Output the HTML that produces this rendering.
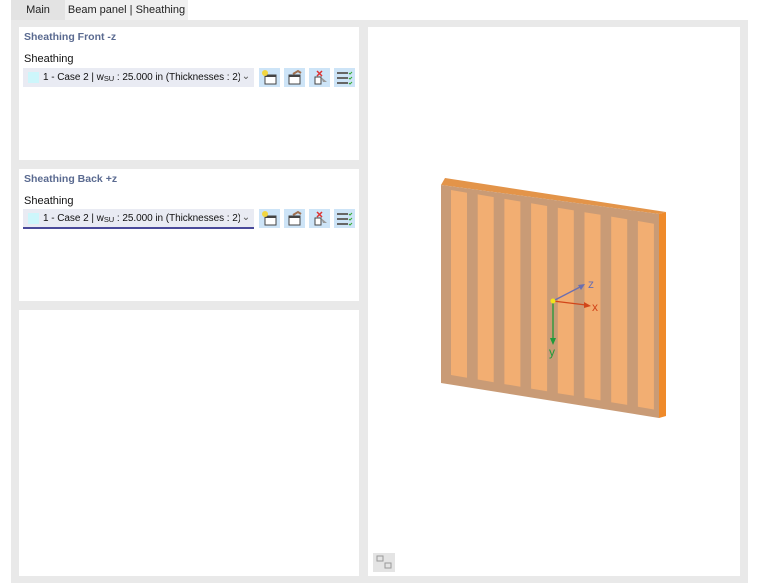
<!DOCTYPE html>
<html><head><style>
body{margin:0;width:760px;height:583px;background:#fff;font-family:"Liberation Sans",sans-serif;position:relative;overflow:hidden;font-size:11px}
.abs{position:absolute}
.tab{position:absolute;top:0;height:20px;line-height:21px;font-size:11px;color:#222;text-align:center}
.panel{position:absolute;background:#fff}
.ttl{position:absolute;left:5px;font-size:10.5px;color:#5a6a90;font-weight:bold}
.lbl{position:absolute;left:5px;font-size:11px;color:#111}
.combo{position:absolute;left:4px;width:231px;height:19px;background:#e9ebf3;font-size:10px;line-height:19px;color:#111;white-space:nowrap}
.combo .sw{position:absolute;left:5px;top:4px;width:11px;height:11px;background:#cdf6fb}
.combo .t{position:absolute;left:20px;letter-spacing:-0.05px}
.combo .ar{position:absolute;right:2px;top:1px;width:12px;height:16px;line-height:16px;text-align:center;color:#555;font-size:10px;background:#e9ebf3}
.btn{position:absolute;width:21px;height:19px;background:#cde4f7}
.btn svg{position:absolute;left:0;top:0}
</style></head><body>
<div class="abs" style="left:11px;top:20px;width:737px;height:563px;background:#e9e9e9"></div>
<div class="tab" style="left:11px;width:54px;background:#e3e3e3">Main</div>
<div class="tab" style="left:65px;width:123px;background:#f0f0f0">Beam panel | Sheathing</div>

<div class="panel" style="left:19px;top:27px;width:340px;height:133px">
 <div class="ttl" style="top:4px">Sheathing Front -z</div>
 <div class="lbl" style="top:26px">Sheathing</div>
 <div class="combo" style="top:41px"><div class="sw"></div><span class="t">1 - Case 2 | w<sub style="font-size:7.5px;vertical-align:-1px">SU</sub> : 25.000 in (Thicknesses : 2)</span><span class="ar">&#8964;</span></div>
 <div class="btn" style="left:240px;top:41px"><svg width="21" height="19"><rect x="6" y="7" width="11" height="9" fill="#fff" stroke="#444"/><rect x="6" y="7" width="11" height="2" fill="#444"/><circle cx="6" cy="5" r="3" fill="#f2d640"/></svg></div>
 <div class="btn" style="left:265px;top:41px"><svg width="21" height="19"><rect x="5" y="7" width="11" height="9" fill="#fff" stroke="#444"/><rect x="5" y="7" width="11" height="2" fill="#444"/><path d="M9 6 L14 3 L17 5" stroke="#a07050" stroke-width="2" fill="none"/></svg></div>
 <div class="btn" style="left:290px;top:41px"><svg width="21" height="19"><rect x="6" y="9" width="6" height="7" fill="#fff" stroke="#444"/><path d="M8 3 L13 8 M13 3 L8 8" stroke="#d33" stroke-width="1.5"/><path d="M12 9 L18 14 L14 14 Z" fill="#999"/></svg></div>
 <div class="btn" style="left:315px;top:41px"><svg width="21" height="19"><g fill="#666"><rect x="3" y="4" width="11" height="2"/><rect x="3" y="9" width="11" height="2"/><rect x="3" y="14" width="11" height="2"/></g><g stroke="#3a3" fill="none"><path d="M15 5 l1 1 l2 -2 M15 10 l1 1 l2 -2 M15 15 l1 1 l2 -2"/></g></svg></div>
</div>
<div class="panel" style="left:19px;top:169px;width:340px;height:132px">
 <div class="ttl" style="top:4px">Sheathing Back +z</div>
 <div class="lbl" style="top:26px">Sheathing</div>
 <div class="combo" style="top:40px;border-bottom:2px solid #4a4a9a;height:18px"><div class="sw"></div><span class="t">1 - Case 2 | w<sub style="font-size:7.5px;vertical-align:-1px">SU</sub> : 25.000 in (Thicknesses : 2)</span><span class="ar">&#8964;</span></div>
 <div class="btn" style="left:240px;top:40px"><svg width="21" height="19"><rect x="6" y="7" width="11" height="9" fill="#fff" stroke="#444"/><rect x="6" y="7" width="11" height="2" fill="#444"/><circle cx="6" cy="5" r="3" fill="#f2d640"/></svg></div>
 <div class="btn" style="left:265px;top:40px"><svg width="21" height="19"><rect x="5" y="7" width="11" height="9" fill="#fff" stroke="#444"/><rect x="5" y="7" width="11" height="2" fill="#444"/><path d="M9 6 L14 3 L17 5" stroke="#a07050" stroke-width="2" fill="none"/></svg></div>
 <div class="btn" style="left:290px;top:40px"><svg width="21" height="19"><rect x="6" y="9" width="6" height="7" fill="#fff" stroke="#444"/><path d="M8 3 L13 8 M13 3 L8 8" stroke="#d33" stroke-width="1.5"/><path d="M12 9 L18 14 L14 14 Z" fill="#999"/></svg></div>
 <div class="btn" style="left:315px;top:40px"><svg width="21" height="19"><g fill="#666"><rect x="3" y="4" width="11" height="2"/><rect x="3" y="9" width="11" height="2"/><rect x="3" y="14" width="11" height="2"/></g><g stroke="#3a3" fill="none"><path d="M15 5 l1 1 l2 -2 M15 10 l1 1 l2 -2 M15 15 l1 1 l2 -2"/></g></svg></div>
</div>
<div class="panel" style="left:19px;top:310px;width:340px;height:266px"></div>
<div class="panel" style="left:368px;top:27px;width:372px;height:549px"></div>
<div class="abs" style="left:373px;top:553px;width:22px;height:19px;background:#e4e4e4"></div>

<svg class="abs" style="left:0;top:0" width="760" height="583">
 <rect x="377" y="556" width="6" height="5" fill="none" stroke="#999"/>
 <rect x="385" y="563" width="6" height="5" fill="none" stroke="#999"/>
 <polygon points="441,185 445,178 666,212 659,214" fill="#e39449"/>
 <polygon points="659,214 666,212 666,416 659,418" fill="#ef8a2a"/>
 <polygon points="441,185 659,214 659,418 441,383" fill="#c99b76"/>
 <g fill="#f2ae72">
  <polygon points="451,190 467,192.7 467,377.7 451,375"/>
  <polygon points="477.7,194.4 493.7,197.1 493.7,382.2 477.7,379.5"/>
  <polygon points="504.4,198.9 520.4,201.5 520.4,386.7 504.4,384.1"/>
  <polygon points="531.1,203.3 547.1,206 547.1,391.3 531.1,388.6"/>
  <polygon points="557.8,207.7 573.8,210.4 573.8,395.8 557.8,393.2"/>
  <polygon points="584.5,212.2 600.5,214.8 600.5,400.4 584.5,397.7"/>
  <polygon points="611.2,216.6 627.2,219.3 627.2,404.9 611.2,402.2"/>
  <polygon points="637.9,221 653.9,223.7 653.9,409.5 637.9,406.8"/>
 </g>
 <line x1="553" y1="301" x2="582" y2="286" stroke="#6b6fb0" stroke-width="1.3"/>
 <polygon points="585,284 578,285 581,290" fill="#6b6fb0"/>
 <line x1="553" y1="301" x2="586" y2="305" stroke="#d2461a" stroke-width="1.3"/>
 <polygon points="591,306 584,302 584,308" fill="#d2461a"/>
 <line x1="553" y1="301" x2="553" y2="340" stroke="#1f9a3a" stroke-width="1.3"/>
 <polygon points="553,345 550,338 556,338" fill="#1f9a3a"/>
 <circle cx="553" cy="301" r="2.5" fill="#f4e21c"/>
 <text x="588" y="288" font-size="12" fill="#6b6fb0" font-family="Liberation Sans">z</text>
 <text x="592" y="311" font-size="12" fill="#d2461a" font-family="Liberation Sans">x</text>
 <text x="549" y="356" font-size="12" fill="#1f9a3a" font-family="Liberation Sans">y</text>
</svg>
</body></html>
